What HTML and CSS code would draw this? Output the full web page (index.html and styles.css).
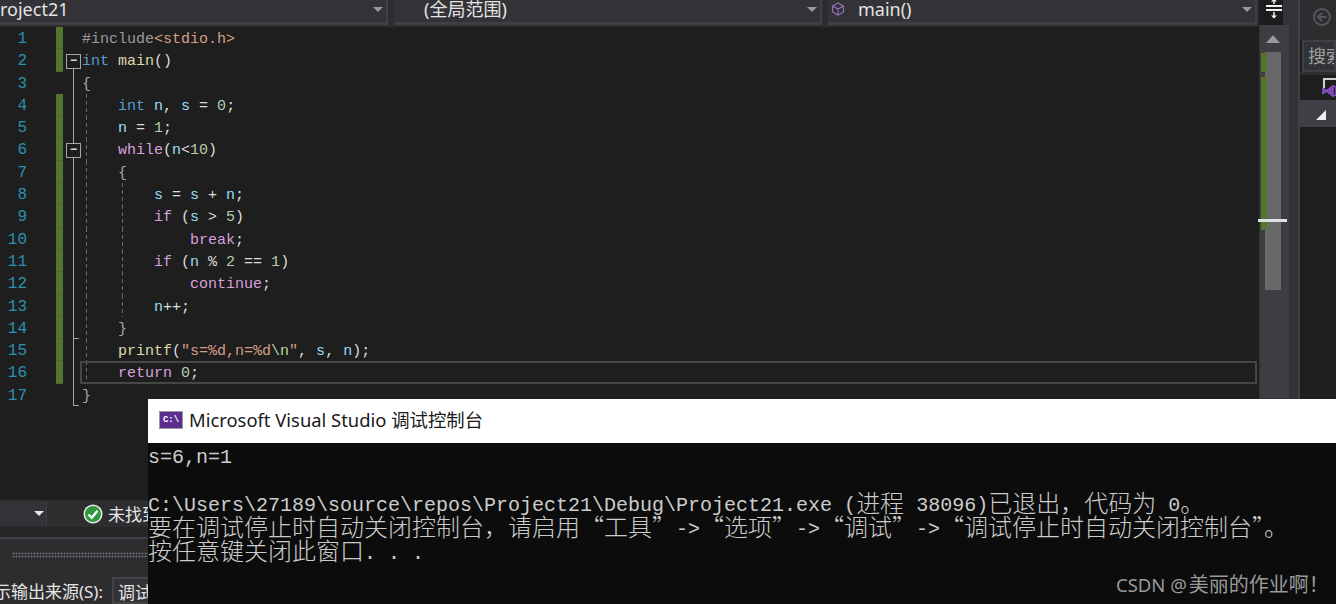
FILE: index.html
```html
<!DOCTYPE html>
<html lang="zh-CN">
<head>
<meta charset="utf-8">
<title>Project21</title>
<link rel="stylesheet" href="styles.css">
</head>
<body>
<div class="ide">
  <div class="editor-col">
    <div class="navbar">
      <div class="drop first"><span class="drop-text">roject21</span><i class="arrow"></i></div>
      <div class="drop second"><span class="drop-text">(全局范围)</span><i class="arrow"></i></div>
      <div class="drop third">
        <svg class="cube" width="14" height="14" viewBox="0 0 14 14"><path d="M7 1 12.5 4v6L7 13 1.500 10V4zM1.500 4 7 7l5.500-3M7 7v6" fill="none" stroke="#9a6fc4" stroke-width="1.100"/></svg>
        <span class="drop-text">main()</span><i class="arrow"></i>
      </div>
    </div>
    <div class="code">
      <div class="row"><span class="num">1</span><span class="mark on"></span><span class="fold"></span><span class="src"><b class="pp">#include</b><b class="st">&lt;stdio.h&gt;</b></span></div>
      <div class="row"><span class="num">2</span><span class="mark on"></span><span class="fold box"></span><span class="src"><b class="kw">int</b> <b class="fn">main</b>()</span></div>
      <div class="row"><span class="num">3</span><span class="mark"></span><span class="fold line"></span><span class="src"><b class="br">{</b></span></div>
      <div class="row"><span class="num">4</span><span class="mark on"></span><span class="fold line"></span><span class="src g1">    <b class="kw">int</b> <b class="id">n</b>, <b class="id">s</b> = <b class="nm">0</b>;</span></div>
      <div class="row"><span class="num">5</span><span class="mark on"></span><span class="fold line"></span><span class="src g1">    <b class="id">n</b> = <b class="nm">1</b>;</span></div>
      <div class="row"><span class="num">6</span><span class="mark on"></span><span class="fold box inner"></span><span class="src g1">    <b class="ct">while</b>(<b class="id">n</b>&lt;<b class="nm">10</b>)</span></div>
      <div class="row"><span class="num">7</span><span class="mark on"></span><span class="fold line"></span><span class="src g1">    <b class="br">{</b></span></div>
      <div class="row"><span class="num">8</span><span class="mark on"></span><span class="fold line"></span><span class="src g2">        <b class="id">s</b> = <b class="id">s</b> + <b class="id">n</b>;</span></div>
      <div class="row"><span class="num">9</span><span class="mark on"></span><span class="fold line"></span><span class="src g2">        <b class="ct">if</b> (<b class="id">s</b> &gt; <b class="nm">5</b>)</span></div>
      <div class="row"><span class="num">10</span><span class="mark on"></span><span class="fold line"></span><span class="src g2">            <b class="ct">break</b>;</span></div>
      <div class="row"><span class="num">11</span><span class="mark on"></span><span class="fold line"></span><span class="src g2">        <b class="ct">if</b> (<b class="id">n</b> % <b class="nm">2</b> == <b class="nm">1</b>)</span></div>
      <div class="row"><span class="num">12</span><span class="mark on"></span><span class="fold line"></span><span class="src g2">            <b class="ct">continue</b>;</span></div>
      <div class="row"><span class="num">13</span><span class="mark on"></span><span class="fold line"></span><span class="src g2">        <b class="id">n</b>++;</span></div>
      <div class="row"><span class="num">14</span><span class="mark on"></span><span class="fold line tick"></span><span class="src g1">    <b class="br">}</b></span></div>
      <div class="row"><span class="num">15</span><span class="mark on"></span><span class="fold line"></span><span class="src g1">    <b class="fn">printf</b>(<b class="st">"s=%d,n=%d<b class="es">\n</b>"</b>, <b class="id">s</b>, <b class="id">n</b>);</span></div>
      <div class="row"><span class="num">16</span><span class="mark on"></span><span class="fold line"></span><span class="src g1 current">    <b class="ct">return</b> <b class="nm">0</b>;</span></div>
      <div class="row"><span class="num">17</span><span class="mark"></span><span class="fold line tick"></span><span class="src"><b class="br">}</b></span></div>
    </div>
    <div class="pane">
      <div class="errbar">
        <div class="scope"><i class="arrow light"></i></div>
        <svg class="ok" width="20" height="20" viewBox="0 0 20 20"><circle cx="10" cy="10" r="9.500" fill="#e8e8e8"/><circle cx="10" cy="10" r="8" fill="#2d9a3e"/><path d="M5.500 10.500 8.800 13.800 14.500 6.800" fill="none" stroke="#fff" stroke-width="2.400"/></svg>
        <span class="errtext">未找到相关问题</span>
      </div>
      <div class="pane-sep"></div>
      <div class="pane-title"><div class="grip"></div></div>
      <div class="outbar">
        <span class="outlabel">显示输出来源(S):</span>
        <div class="outdrop">调试</div>
      </div>
    </div>
  </div>
  <div class="vscroll">
    <div class="split">
      <svg width="18" height="22" viewBox="0 0 18 22"><path d="M1 8h16M1 12h16" stroke="#f2f2f2" stroke-width="2"/><path d="M9 1v5M9 14v6" stroke="#f2f2f2" stroke-width="1.500"/><path d="M6 3.500 9 .5l3 3zM6 17.500l3 3 3-3z" fill="#f2f2f2"/></svg>
    </div>
    <div class="track">
      <i class="up"></i>
      <div class="thumb"></div>
      <div class="change one"></div>
      <div class="change two"></div>
      <div class="caret"></div>
    </div>
  </div>
  <div class="gutter-strip"></div>
  <div class="side">
    <div class="side-top">
      <svg width="18" height="18" viewBox="0 0 18 18"><circle cx="9" cy="9" r="8" fill="none" stroke="#55555a" stroke-width="2"/><path d="M4.500 9h9M9 5 5 9l4 4" fill="none" stroke="#55555a" stroke-width="2.200"/></svg>
    </div>
    <div class="search">搜索</div>
    <div class="tree-row">
      <span class="doc"></span>
      <svg class="vs" width="15" height="12" viewBox="0 0 15 12"><path d="M1 3.500 4.500 6 1 8.500zM4.500 6 11 1l3 1v8l-3 1zM11 3.500 7.500 6 11 8.500z" fill="none" stroke="#8a4fd0" stroke-width="1.600"/></svg>
    </div>
    <div class="tree-sel"><i class="expand"></i></div>
  </div>
</div>
<section class="console">
  <header class="con-title">
    <span class="con-icon">C:\</span>
    <span class="con-name">Microsoft Visual Studio 调试控制台</span>
  </header>
  <div class="con-body">
    <p>s=6,n=1</p>
    <p></p>
    <p>C:\Users\27189\source\repos\Project21\Debug\Project21.exe (<span class="han">进程</span> 38096)<span class="han">已退出，代码为</span> 0<span class="han">。</span></p>
    <p><span class="han">要在调试停止时自动关闭控制台，请启用“工具”</span>-&gt;<span class="han">“选项”</span>-&gt;<span class="han">“调试”</span>-&gt;<span class="han">“调试停止时自动关闭控制台”。</span></p>
    <p><span class="han">按任意键关闭此窗口</span>. . .</p>
  </div>
</section>
<div class="watermark">CSDN @<span class="wm-han">美丽的作业啊！</span></div>
</body>
</html>
```
FILE: styles.css
```css
* { box-sizing: border-box; }
html, body { margin: 0; height: 604px; overflow: hidden; background: #2d2d30; }
body { position: relative; width: 1336px; font-family: "Noto Sans", "Noto Sans CJK SC", sans-serif; }
.ide { display: flex; width: 1336px; height: 604px; overflow: hidden; }

.editor-col { width: 1259px; flex: none; display: flex; flex-direction: column; background: #1e1e1e; }
.navbar { height: 27px; display: flex; gap: 6px; background: #2d2d30; padding-bottom: 2px; flex: none; }
.drop { height: 25px; background: #333337; border: solid #3f3f46; border-width: 0 2px 3px 0; display: flex; align-items: flex-start; color: #e4e4e4; font-size: 18px; line-height: 19px; }
.first { width: 388px; }
.second { width: 428px; padding-left: 30px; }
.third { width: 429px; padding-left: 3px; }
.cube { margin-right: 13px; flex: none; margin-top: 2px; }
.drop-text { white-space: nowrap; }
.arrow { margin-left: auto; margin-right: 3px; margin-top: 7px; width: 0; height: 0; border: solid transparent; border-width: 5px 5px 0; border-top-color: #999; flex: none; }

.code { height: 473px; flex: none; padding-right: 2px; font: 15px/22.300px "Liberation Mono", "Noto Sans CJK SC", monospace; color: #dcdcdc; }
.row { height: 22.300px; display: grid; grid-template-columns: 27px 36px 19px 1fr; }
.num { text-align: right; color: #2b91af; font-size: 16px; padding-top: 3px; line-height: 19.300px; }
.mark { margin-left: 29px; }
.mark.on { background: #53752d; box-shadow: inset 0 -1px 0 #4b6a29; }
.fold { position: relative; }
.fold.line::before, .fold.box.inner::before { content: ""; position: absolute; left: 10px; top: 0; bottom: 0; width: 1px; background: #a5a5a5; }
.fold.box::after { content: "\2212"; position: absolute; left: 3px; top: 5px; width: 13px; height: 13px; border: 1px solid #a5a5a5; background: #1e1e1e; color: #e0e0e0; font: bold 12px/11px "Liberation Sans", sans-serif; text-align: center; }
.fold.box:not(.inner)::before { content: ""; position: absolute; left: 10px; top: 18px; bottom: 0; width: 1px; background: #a5a5a5; }
.fold.tick::after { content: ""; position: absolute; left: 10px; bottom: 0; width: 6px; height: 1px; background: #a5a5a5; }
.src { white-space: pre; min-width: 0; padding-top: 3px; line-height: 19.300px; }
.src b { font-weight: 400; }
.g1 { background: repeating-linear-gradient(#6a6a6a 0 4px, transparent 4px 7px) 4px 0 / 1px 100% no-repeat; }
.g2 { background: repeating-linear-gradient(#6a6a6a 0 4px, transparent 4px 7px) 4px 0 / 1px 100% no-repeat, repeating-linear-gradient(#6a6a6a 0 4px, transparent 4px 7px) 40px 0 / 1px 100% no-repeat; }
.current { margin-left: -2px; padding-left: 2px; box-shadow: inset 0 0 0 2px #464646; background-position: 6px 0; }
.pp { color: #9b9b9b; }
.st { color: #d69d85; }
.es { color: #b8d7a3; }
.kw { color: #569cd6; }
.ct { color: #d8a0df; }
.fn { color: #dcdcaa; }
.id { color: #9cdcfe; }
.nm { color: #b5cea8; }
.br { color: #a8a8a8; }

.pane { flex: 1; background: #2d2d30; display: flex; flex-direction: column; min-height: 0; }
.errbar { height: 27px; display: flex; align-items: center; flex: none; background: #2d2d30; }
.scope { width: 47px; height: 25px; background: #333337; border-right: 1px solid #3f3f46; display: flex; align-items: center; }
.light { border-top-color: #e8e8e8; margin-right: 2px; margin-top: 0; }
.ok { margin-left: 36px; flex: none; }
.errtext { margin-left: 5px; color: #e4e4e4; font-size: 17px; white-space: nowrap; }
.pane-sep { height: 10px; background: #252526; flex: none; }
.pane-title { height: 40px; border-top: 2px solid #3f3f46; flex: none; padding: 13px 0 0 12px; }
.grip { height: 6px; background: radial-gradient(#5c5c62 45%, transparent 55%) 0 0 / 3px 3px; }
.outbar { display: flex; flex: 1; min-height: 0; }
.outlabel { width: 103px; flex: none; display: flex; justify-content: flex-end; white-space: nowrap; font-size: 17px; line-height: 30px; color: #e4e4e4; }
.outdrop { margin-left: 9px; width: 200px; border: 2px solid #434346; background: #333337; color: #e4e4e4; font-size: 17px; line-height: 28px; padding-left: 4px; }

.vscroll { width: 30px; flex: none; display: flex; flex-direction: column; background: #333337; }
.split { height: 25px; width: 24px; background: #1c1c1c; flex: none; display: flex; justify-content: center; align-items: flex-start; padding-left: 6px; }
.split svg { margin-top: -2px; flex: none; }
.track { height: 373px; margin-top: 0; background: #3e3e42; position: relative; flex: none; border-left: 1px solid #333337; }
.up { position: absolute; left: 6px; top: 10px; width: 0; height: 0; border: solid transparent; border-width: 0 7px 8px; border-bottom-color: #999; }
.thumb { position: absolute; left: 5px; top: 27px; width: 16px; height: 238px; background: #686868; }
.change { position: absolute; left: 1px; width: 6px; background: #53752d; }
.one { top: 28px; height: 19px; }
.two { top: 52px; height: 153px; }
.caret { position: absolute; left: -2px; top: 194px; width: 29px; height: 3px; background: #e0e0e0; }

.gutter-strip { width: 11px; flex: none; background: #333337; border-right: 2px solid #3f3f46; }
.side { flex: 1; min-width: 0; background: #1e1e1e; display: flex; flex-direction: column; overflow: hidden; }
.side-top { height: 40px; background: #2d2d30; display: flex; align-items: center; padding: 0 0 6px 13px; flex: none; }
.search { height: 32px; margin-left: 2px; background: #333337; border: 2px solid #3f3f46; color: #a0a0a0; font-size: 18px; line-height: 28px; padding-left: 4px; white-space: nowrap; flex: none; overflow: hidden; }
.tree-row { height: 28px; border-top: 3px solid #2d2d30; position: relative; flex: none; }
.doc { position: absolute; left: 23px; top: 3px; width: 14px; height: 10px; border: solid #d0d0d0; border-width: 2px 0 0 2px; }
.vs { position: absolute; left: 22px; top: 10px; }
.tree-sel { height: 27px; background: #3f3f46; position: relative; flex: none; }
.expand { position: absolute; left: 16px; top: 10px; width: 0; height: 0; border: solid transparent; border-width: 0 0 10px 10px; border-bottom-color: #eee; }

.console { position: absolute; left: 148px; top: 399px; right: 0; bottom: 0; display: flex; flex-direction: column; background: #0c0c0c; }
.con-title { height: 44px; background: #fff; display: flex; align-items: center; padding: 0 0 2px 11px; flex: none; }
.con-icon { width: 24px; height: 18px; background: #5c2d91; border: 1px solid #999; color: #fff; font: bold 9px/16px "Liberation Mono", monospace; text-align: center; flex: none; }
.con-name { margin-left: 6px; font-size: 18.400px; line-height: 26px; color: #1a1a1a; white-space: nowrap; }
.con-body { color: #cccccc; font: 20px/24px "Liberation Mono", "Noto Sans CJK SC", monospace; padding-top: 3px; }
.con-body p { margin: 0; height: 24px; white-space: pre; }
.han { font-size: 24px; font-family: "Noto Sans CJK SC", sans-serif; line-height: 0; font-weight: 300; vertical-align: -1px; }
.watermark { position: absolute; left: 1116px; top: 572px; color: #9a9a9a; font-size: 18.500px; line-height: 25px; white-space: nowrap; }
.wm-han { font-family: "Noto Sans CJK TC", sans-serif; font-size: 20px; line-height: 0; margin-left: 2px; }
```
